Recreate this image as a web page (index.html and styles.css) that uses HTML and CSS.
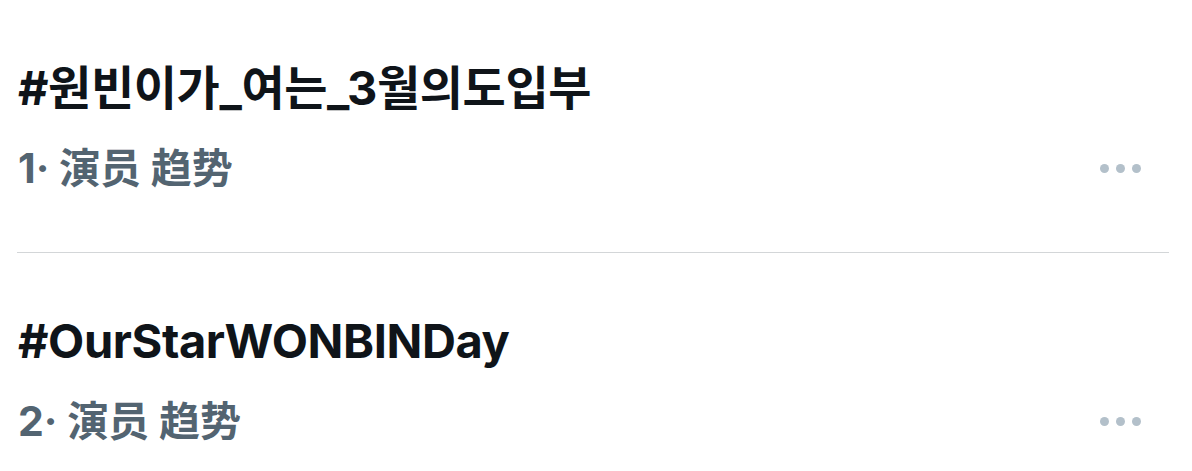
FILE: index.html
```html
<!DOCTYPE html>
<html lang="ko">
<head>
<meta charset="utf-8">
<link rel="stylesheet" href="styles.css">
</head>
<body>
<div class="list">
  <div class="trend">
    <div class="text">
      <div class="title">#원빈이가_여는_3월의도입부</div>
      <div class="meta">1· 演员 趋势</div>
    </div>
    <div class="more"><span></span><span></span><span></span></div>
  </div>
  <div class="trend">
    <div class="text">
      <div class="title">#OurStarWONBINDay</div>
      <div class="meta">2· 演员 趋势</div>
    </div>
    <div class="more"><span></span><span></span><span></span></div>
  </div>
</div>
</body>
</html>
```
FILE: styles.css
```css
html, body { margin: 0; padding: 0; background: #fff; }
body { font-family: Inter, "Noto Sans CJK KR", "Noto Sans CJK SC", sans-serif; width: 1192px; height: 471px; overflow: hidden; }
.list { padding: 0 23px 0 17px; }
.trend { display: flex; align-items: flex-end; justify-content: space-between; padding: 60px 0 60px 1px; border-bottom: 1px solid #d3d6d8; }
.trend:last-child { border-bottom: none; padding-bottom: 26px; }
.text { display: flex; flex-direction: column; gap: 28px; }
.title { font-size: 47px; font-weight: 700; color: #0f1419; line-height: 56px; letter-spacing: -0.4px; }
.meta { font-family: Inter, "Noto Sans CJK SC", sans-serif; font-size: 41px; font-weight: 700; color: #536471; line-height: 48px; }
.more { display: flex; align-items: center; gap: 7px; height: 48px; margin-right: 28px; }
.more span { width: 9px; height: 9px; border-radius: 50%; background: #b3c0ca; }
```
